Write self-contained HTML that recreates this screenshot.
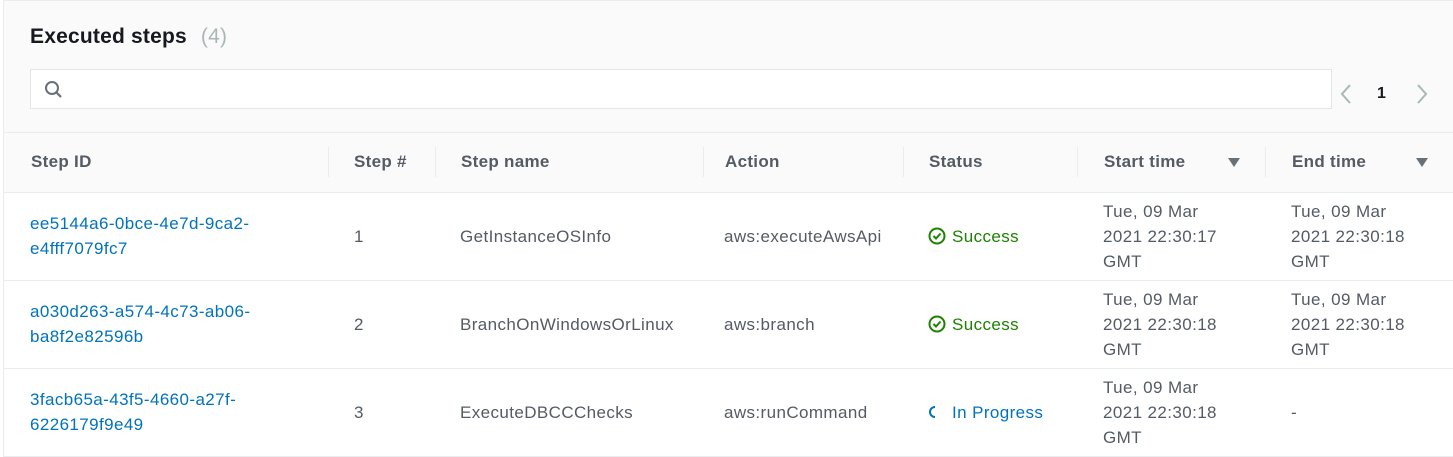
<!DOCTYPE html>
<html><head><style>
*{box-sizing:border-box;margin:0;padding:0}
body{width:1453px;height:457px;background:#fff;font-family:"Liberation Sans",sans-serif;color:#16191f;overflow:hidden;position:relative}
.wrap{position:absolute;left:3px;top:0;width:1450px;height:457px;border-left:1px solid #eaeded;border-top:1px solid #eaeded}
.head{position:absolute;left:0;top:0;width:1450px;height:192px;background:#fafafa;border-bottom:1px solid #eaeded}
.title{position:absolute;left:26px;top:24px;font-size:21px;font-weight:bold;color:#16191f;letter-spacing:0.2px}
.title span{font-weight:normal;color:#aab7b8;margin-left:14px}
.search{position:absolute;left:26px;top:68px;width:1302px;height:40px;background:#fff;border:1px solid #e3e6e6}
.sep{position:absolute;left:0;top:131px;width:1450px;border-top:1px solid #eaeded}
.th{position:absolute;top:151px;font-size:17px;font-weight:bold;color:#545b64;letter-spacing:0.3px}
.vd{position:absolute;top:146px;height:30px;border-left:1px solid #eaeded}
.tri{position:absolute;top:157px;width:0;height:0;border-left:6px solid transparent;border-right:6px solid transparent;border-top:9px solid #687078}
.row{position:absolute;left:0;width:1450px;height:88px;border-bottom:1px solid #eaeded}
.c{position:absolute;font-size:17px;line-height:25px;color:#16191f;letter-spacing:0.4px;white-space:nowrap}
.link{color:#0073bb}
.g{color:#1d8102}
.b{color:#0073bb}
.t{color:#545b64}
</style></head><body>
<div class="wrap">
<div class="head">
<div class="title">Executed steps<span>(4)</span></div>
<div class="search"><svg width="22" height="22" style="position:absolute;left:12px;top:9px" viewBox="0 0 22 22"><circle cx="9" cy="9" r="6" fill="none" stroke="#687078" stroke-width="2"/><line x1="13.5" y1="13.5" x2="18" y2="18" stroke="#687078" stroke-width="2.2"/></svg></div>
<svg width="14" height="22" style="position:absolute;left:1335px;top:82px" viewBox="0 0 14 22"><polyline points="11,2 3,11 11,20" fill="none" stroke="#aab7b8" stroke-width="2"/></svg>
<div style="position:absolute;left:1373px;top:84px;font-size:16px;font-weight:bold">1</div>
<svg width="14" height="22" style="position:absolute;left:1411px;top:82px" viewBox="0 0 14 22"><polyline points="3,2 11,11 3,20" fill="none" stroke="#aab7b8" stroke-width="2"/></svg>
<div class="sep"></div>
<div class="th" style="left:27px">Step ID</div>
<div class="vd" style="left:324px"></div>
<div class="th" style="left:350px">Step #</div>
<div class="vd" style="left:431px"></div>
<div class="th" style="left:457px">Step name</div>
<div class="vd" style="left:699px"></div>
<div class="th" style="left:721px">Action</div>
<div class="vd" style="left:899px"></div>
<div class="th" style="left:925px">Status</div>
<div class="tri" style="left:1224px"></div>
<div class="vd" style="left:1073px"></div>
<div class="th" style="left:1100px">Start time</div>
<div class="vd" style="left:1261px"></div>
<div class="th" style="left:1288px">End time</div>
<div class="tri" style="left:1412px"></div>
</div>

<div class="row" style="top:192px">
<div class="c link" style="left:26px;top:18px">ee5144a6-0bce-4e7d-9ca2-<br>e4fff7079fc7</div>
<div class="c t" style="left:350px;top:31px">1</div>
<div class="c t" style="left:456px;top:31px">GetInstanceOSInfo</div>
<div class="c t" style="left:720px;top:31px">aws:executeAwsApi</div>
<div class="c g" style="left:924px;top:31px"><svg width="18" height="18" viewBox="0 0 18 18" style="vertical-align:-3px;margin-right:6px"><circle cx="9" cy="9" r="7.5" fill="none" stroke="#1d8102" stroke-width="2"/><polyline points="5.5,9 8,11.5 12.5,6.5" fill="none" stroke="#1d8102" stroke-width="2"/></svg>Success</div>
<div class="c t" style="left:1099px;top:6px">Tue, 09 Mar<br>2021 22:30:17<br>GMT</div>
<div class="c t" style="left:1287px;top:6px">Tue, 09 Mar<br>2021 22:30:18<br>GMT</div>
</div>
<div class="row" style="top:280px">
<div class="c link" style="left:26px;top:18px">a030d263-a574-4c73-ab06-<br>ba8f2e82596b</div>
<div class="c t" style="left:350px;top:31px">2</div>
<div class="c t" style="left:456px;top:31px">BranchOnWindowsOrLinux</div>
<div class="c t" style="left:720px;top:31px">aws:branch</div>
<div class="c g" style="left:924px;top:31px"><svg width="18" height="18" viewBox="0 0 18 18" style="vertical-align:-3px;margin-right:6px"><circle cx="9" cy="9" r="7.5" fill="none" stroke="#1d8102" stroke-width="2"/><polyline points="5.5,9 8,11.5 12.5,6.5" fill="none" stroke="#1d8102" stroke-width="2"/></svg>Success</div>
<div class="c t" style="left:1099px;top:6px">Tue, 09 Mar<br>2021 22:30:18<br>GMT</div>
<div class="c t" style="left:1287px;top:6px">Tue, 09 Mar<br>2021 22:30:18<br>GMT</div>
</div>
<div class="row" style="top:368px">
<div class="c link" style="left:26px;top:18px">3facb65a-43f5-4660-a27f-<br>6226179f9e49</div>
<div class="c t" style="left:350px;top:31px">3</div>
<div class="c t" style="left:456px;top:31px">ExecuteDBCCChecks</div>
<div class="c t" style="left:720px;top:31px">aws:runCommand</div>
<div class="c b" style="left:924px;top:31px"><svg width="18" height="18" viewBox="0 0 18 18" style="vertical-align:-3px;margin-right:6px"><path d="M9 4 A5 5 0 0 0 9 14" fill="none" stroke="#0073bb" stroke-width="2" transform="translate(-2,0)"/></svg>In Progress</div>
<div class="c t" style="left:1099px;top:6px">Tue, 09 Mar<br>2021 22:30:18<br>GMT</div>
<div class="c t" style="left:1287px;top:31px">-</div>
</div>
</div>
</body></html>
